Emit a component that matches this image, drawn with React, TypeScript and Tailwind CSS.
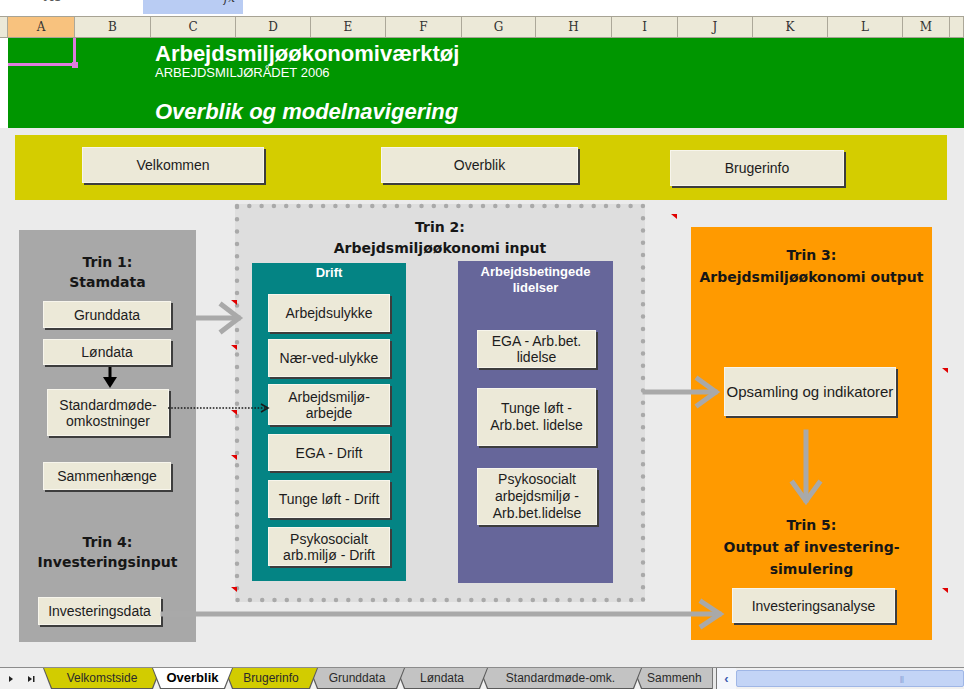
import clsx from 'clsx'
import type { ReactNode } from 'react'

const cols = [
  { label: '', w: 'w-[8px]' },
  { label: 'A', w: 'w-[67px]', on: true },
  { label: 'B', w: 'w-[76px]' },
  { label: 'C', w: 'w-[85px]' },
  { label: 'D', w: 'w-[75px]' },
  { label: 'E', w: 'w-[75px]' },
  { label: 'F', w: 'w-[76px]' },
  { label: 'G', w: 'w-[74px]' },
  { label: 'H', w: 'w-[76px]' },
  { label: 'I', w: 'w-[66px]' },
  { label: 'J', w: 'w-[75px]' },
  { label: 'K', w: 'w-[75px]' },
  { label: 'L', w: 'w-[75px]' },
  { label: 'M', w: 'w-[47px]' },
  { label: '', w: 'w-[14px]' },
]

const tabs = [
  { label: 'Velkomstside', w: 'w-[118px]', bg: 'bg-[#d2cc00]', z: 'z-[7]' },
  { label: 'Overblik', w: 'w-[81px]', bg: 'bg-white', z: 'z-[9]', active: true },
  { label: 'Brugerinfo', w: 'w-[94px]', bg: 'bg-[#d2cc00]', z: 'z-[6]' },
  { label: 'Grunddata', w: 'w-[96px]', bg: 'bg-[#c3c3c3]', z: 'z-[5]' },
  { label: 'Løndata', w: 'w-[92px]', bg: 'bg-[#c3c3c3]', z: 'z-[4]' },
  { label: 'Standardmøde-omk.', w: 'w-[163px]', bg: 'bg-[#c3c3c3]', z: 'z-[3]' },
  { label: 'Sammenh', w: 'w-[110px]', bg: 'bg-[#c3c3c3]', z: 'z-[2]', left: true },
]

const Btn = ({ className, children }: { className?: string; children: ReactNode }) => (
  <div
    className={clsx(
      'flex shrink-0 items-center justify-center border border-[#f7f5ec] bg-[#ece9d8] text-center text-[14px] leading-[16px] text-[#1c1c1c] shadow-[2px_2px_0_#3d3d3d]',
      className,
    )}
  >
    <span>{children}</span>
  </div>
)

const heading = "w-full text-center font-['DejaVu_Sans',sans-serif] text-[14px] font-bold text-[#161616]"

// grey arrows, comment markers and dotted outline drawn on top
const Overlay = () => {
  const marks = [
    [231, 300],
    [231, 345],
    [231, 410],
    [231, 455],
    [231, 587],
    [671, 214],
    [942, 368],
    [942, 588],
  ]
  return (
    <svg className="pointer-events-none absolute inset-0 z-20" width={964} height={689}>
      <rect
        x={237}
        y={206}
        width={406}
        height={394}
        fill="none"
        stroke="#a9a9a9"
        strokeWidth={4.5}
        strokeDasharray="0 12.3"
        strokeLinecap="round"
      />
      <g stroke="#a9a9a9" strokeWidth={5} fill="none" strokeLinecap="square">
        <line x1={196} y1={318} x2={238} y2={318} />
        <polyline points="222,305 239,318 222,331" />
        <line x1={645} y1={392} x2={715} y2={392} />
        <polyline points="698,379 716,392 698,405" />
        <line x1={806} y1={432} x2={806} y2={500} />
        <polyline points="793,483 806,501 819,483" />
        <line x1={163} y1={614} x2={719} y2={614} />
        <polyline points="702,602 720,614 702,626" />
      </g>
      <line x1={168} y1={408} x2={266} y2={408} stroke="#1a1a1a" strokeWidth={1.6} strokeDasharray="1.6 1.6" />
      <polyline points="261,404 268,408 261,412" stroke="#1a1a1a" strokeWidth={1.6} fill="none" />
      <line x1={110} y1={367} x2={110} y2={379} stroke="#000" strokeWidth={3} />
      <polygon points="103,377 117,377 110,388" fill="#000" />
      {marks.map(([x, y]) => (
        <polygon key={`${x}-${y}`} points={`${x},${y} ${x + 6},${y} ${x + 6},${y + 5}`} fill="#e00000" />
      ))}
    </svg>
  )
}

export default function App() {
  return (
    <div className="relative h-[689px] w-[964px] overflow-hidden bg-white font-['Liberation_Sans',Arial,sans-serif]">
      {/* formula bar, cut off */}
      <div className="flex h-[16px] overflow-hidden">
        <span className="ml-[44px] -mt-[10px] w-[99px] font-['DejaVu_Serif',serif] text-[13px] leading-[14px] text-[#555]">A1</span>
        <div className="flex h-[14px] w-[100px] justify-end bg-[#b9ccf3] pr-[8px]">
          <span className="-mt-[9px] font-['DejaVu_Serif',serif] text-[12px] italic leading-[14px] text-[#333]">fx</span>
        </div>
      </div>

      {/* column headers */}
      <div className="flex h-[22px] border-y border-[#a7a394] bg-[#ece9d8]">
        {cols.map((c, i) => (
          <div
            key={i}
            className={clsx(
              "flex shrink-0 items-center justify-center border-r border-[#aca899] font-['DejaVu_Serif',serif] text-[12px] text-[#333]",
              c.w,
              c.on && 'bg-[#f8c27e]',
            )}
          >
            {c.label}
          </div>
        ))}
      </div>

      {/* green banner */}
      <div className="flex h-[90px]">
        <div className="w-[8px] bg-white" />
        <div className="relative flex-1 bg-[#009600] pl-[147px] pt-[4px] text-white">
          <div className="absolute left-0 top-0 h-[28px] w-[68px] border-b-[3px] border-r-[3px] border-[#e07ce0]" />
          <div className="absolute left-[64px] top-[24px] h-[6px] w-[6px] bg-[#e07ce0]" />
          <div className="text-[22px] font-bold leading-[24px]">Arbejdsmiljøøkonomiværktøj</div>
          <div className="text-[13px] leading-[14px]">ARBEJDSMILJØRÅDET 2006</div>
          <div className="mt-[20px] text-[22px] font-bold italic leading-[24px]">Overblik og modelnavigering</div>
        </div>
      </div>

      {/* sheet body */}
      <div className="h-[539px] bg-[#ebebeb] pt-[7px]">
        <div className="ml-[15px] flex h-[65px] w-[932px] items-start bg-[#d4cd00]">
          <Btn className="ml-[67px] mt-[12px] h-[36px] w-[182px]">Velkommen</Btn>
          <Btn className="ml-[117px] mt-[12px] h-[36px] w-[197px]">Overblik</Btn>
          <Btn className="ml-[92px] mt-[15px] h-[36px] w-[174px]">Brugerinfo</Btn>
        </div>

        <div className="flex items-start">
          {/* Trin 1 + 4 */}
          <div className="ml-[19px] mt-[30px] flex h-[412px] w-[177px] flex-col items-start bg-[#a8a8a8] pt-[22px]">
            <div className={clsx(heading, 'leading-[20px]')}>
              Trin 1:
              <br />
              Stamdata
            </div>
            <Btn className="ml-[24px] mt-[9px] h-[27px] w-[128px]">Grunddata</Btn>
            <Btn className="ml-[24px] mt-[11px] h-[26px] w-[128px]">Løndata</Btn>
            <Btn className="ml-[28px] mt-[24px] h-[47px] w-[122px]">
              Standardmøde-
              <br />
              omkostninger
            </Btn>
            <Btn className="ml-[24px] mt-[26px] h-[28px] w-[128px]">Sammenhænge</Btn>
            <div className={clsx(heading, 'mt-[42px] leading-[20px]')}>
              Trin 4:
              <br />
              Investeringsinput
            </div>
            <Btn className="ml-[19px] mt-[25px] h-[28px] w-[123px]">Investeringsdata</Btn>
          </div>

          {/* Trin 2 */}
          <div className="ml-[39px] mt-[4px] h-[398px] w-[410px] bg-[#dedede] pt-[13px]">
            <div className={clsx(heading, 'leading-[21px]')}>
              Trin 2:
              <br />
              Arbejdsmiljøøkonomi input
            </div>
            <div className="flex items-start">
              <div className="ml-[17px] mt-[4px] flex h-[318px] w-[154px] flex-col items-start bg-[#048484] pt-[2px]">
                <div className="w-full text-center text-[13px] font-bold leading-[16px] text-white">Drift</div>
                <Btn className="ml-[16px] mt-[13px] h-[38px] w-[122px]">Arbejdsulykke</Btn>
                <Btn className="ml-[16px] mt-[7px] h-[38px] w-[122px]">Nær-ved-ulykke</Btn>
                <Btn className="ml-[16px] mt-[7px] h-[41px] w-[122px]">
                  Arbejdsmiljø-
                  <br />
                  arbejde
                </Btn>
                <Btn className="ml-[16px] mt-[9px] h-[37px] w-[122px]">EGA - Drift</Btn>
                <Btn className="ml-[16px] mt-[9px] h-[38px] w-[122px]">Tunge løft - Drift</Btn>
                <Btn className="ml-[16px] mt-[9px] h-[39px] w-[122px]">
                  Psykosocialt
                  <br />
                  arb.miljø - Drift
                </Btn>
              </div>
              <div className="ml-[52px] mt-[2px] flex h-[322px] w-[155px] flex-col items-start bg-[#66669a] pt-[3px]">
                <div className="w-full text-center text-[13px] font-bold leading-[16px] text-white">
                  Arbejdsbetingede
                  <br />
                  lidelser
                </div>
                <Btn className="ml-[19px] mt-[34px] h-[38px] w-[119px] leading-[15px]">
                  EGA - Arb.bet.
                  <br />
                  lidelse
                </Btn>
                <Btn className="ml-[19px] mt-[20px] h-[58px] w-[119px] leading-[17px]">
                  Tunge løft -
                  <br />
                  Arb.bet. lidelse
                </Btn>
                <Btn className="ml-[19px] mt-[22px] h-[57px] w-[120px] leading-[17px]">
                  Psykosocialt
                  <br />
                  arbejdsmiljø -
                  <br />
                  Arb.bet.lidelse
                </Btn>
              </div>
            </div>
          </div>

          {/* Trin 3 + 5 */}
          <div className="ml-[46px] mt-[27px] flex h-[413px] w-[241px] flex-col items-start bg-[#ff9a00] pt-[17px]">
            <div className={clsx(heading, 'leading-[22px] text-[#1a1200]')}>
              Trin 3:
              <br />
              Arbejdsmiljøøkonomi output
            </div>
            <Btn className="ml-[33px] mt-[79px] h-[49px] w-[172px] text-[15px]">Opsamling og indikatorer</Btn>
            <div className={clsx(heading, 'mt-[98px] h-[63px] overflow-hidden leading-[22px] text-[#1a1200]')}>
              Trin 5:
              <br />
              Output af investering-
              <br />
              simulering
            </div>
            <Btn className="ml-[41px] mt-[11px] h-[35px] w-[163px]">Investeringsanalyse</Btn>
          </div>
        </div>
      </div>

      {/* sheet tabs */}
      <div className="flex h-[22px] border-t border-[#8c8c8c] bg-[#f1f1f1]">
        <div className="flex w-[43px] shrink-0 items-center pl-[9px]">
          <svg width={30} height={10} viewBox="0 0 30 10">
            <polygon points="0,2 4,5 0,8" fill="#222" />
            <polygon points="19,2 23,5 19,8" fill="#222" />
            <rect x={24} y={2} width={1.5} height={6} fill="#222" />
          </svg>
        </div>
        <div className="flex w-[669px] shrink-0 overflow-hidden">
          {tabs.map((t, i) => (
            <div
              key={t.label}
              className={clsx(
                'relative h-[21px] shrink-0 bg-[#5a5a5a] [clip-path:polygon(0_0,100%_0,calc(100%-8px)_100%,8px_100%)]',
                t.w,
                t.z,
                i > 0 && '-ml-[9px]',
              )}
            >
              <div
                className={clsx(
                  'flex h-[20px] items-center text-[12px] [clip-path:polygon(1px_0,calc(100%-1px)_0,calc(100%-9px)_100%,9px_100%)]',
                  t.bg,
                  t.left ? 'justify-start pl-[14px]' : 'justify-center',
                  t.active ? 'text-[13px] font-bold text-black' : 'text-[#2a2a2a]',
                )}
              >
                {t.label}
              </div>
            </div>
          ))}
        </div>
        <div className="w-[5px] shrink-0 border-x border-[#777] bg-[#e8e8e8]" />
        <div className="flex w-[19px] shrink-0 items-center justify-center bg-[#f4f6fb] text-[13px] font-bold text-[#3b5bb0]">‹</div>
        <div className="my-[2px] flex flex-1 items-center justify-end rounded-[2px] border border-[#9fb6e6] bg-[#c3d4f6] pr-[60px]">
          <span className="text-[8px] tracking-[-1px] text-[#8aa2d8]">|||</span>
        </div>
      </div>

      <Overlay />
    </div>
  )
}
